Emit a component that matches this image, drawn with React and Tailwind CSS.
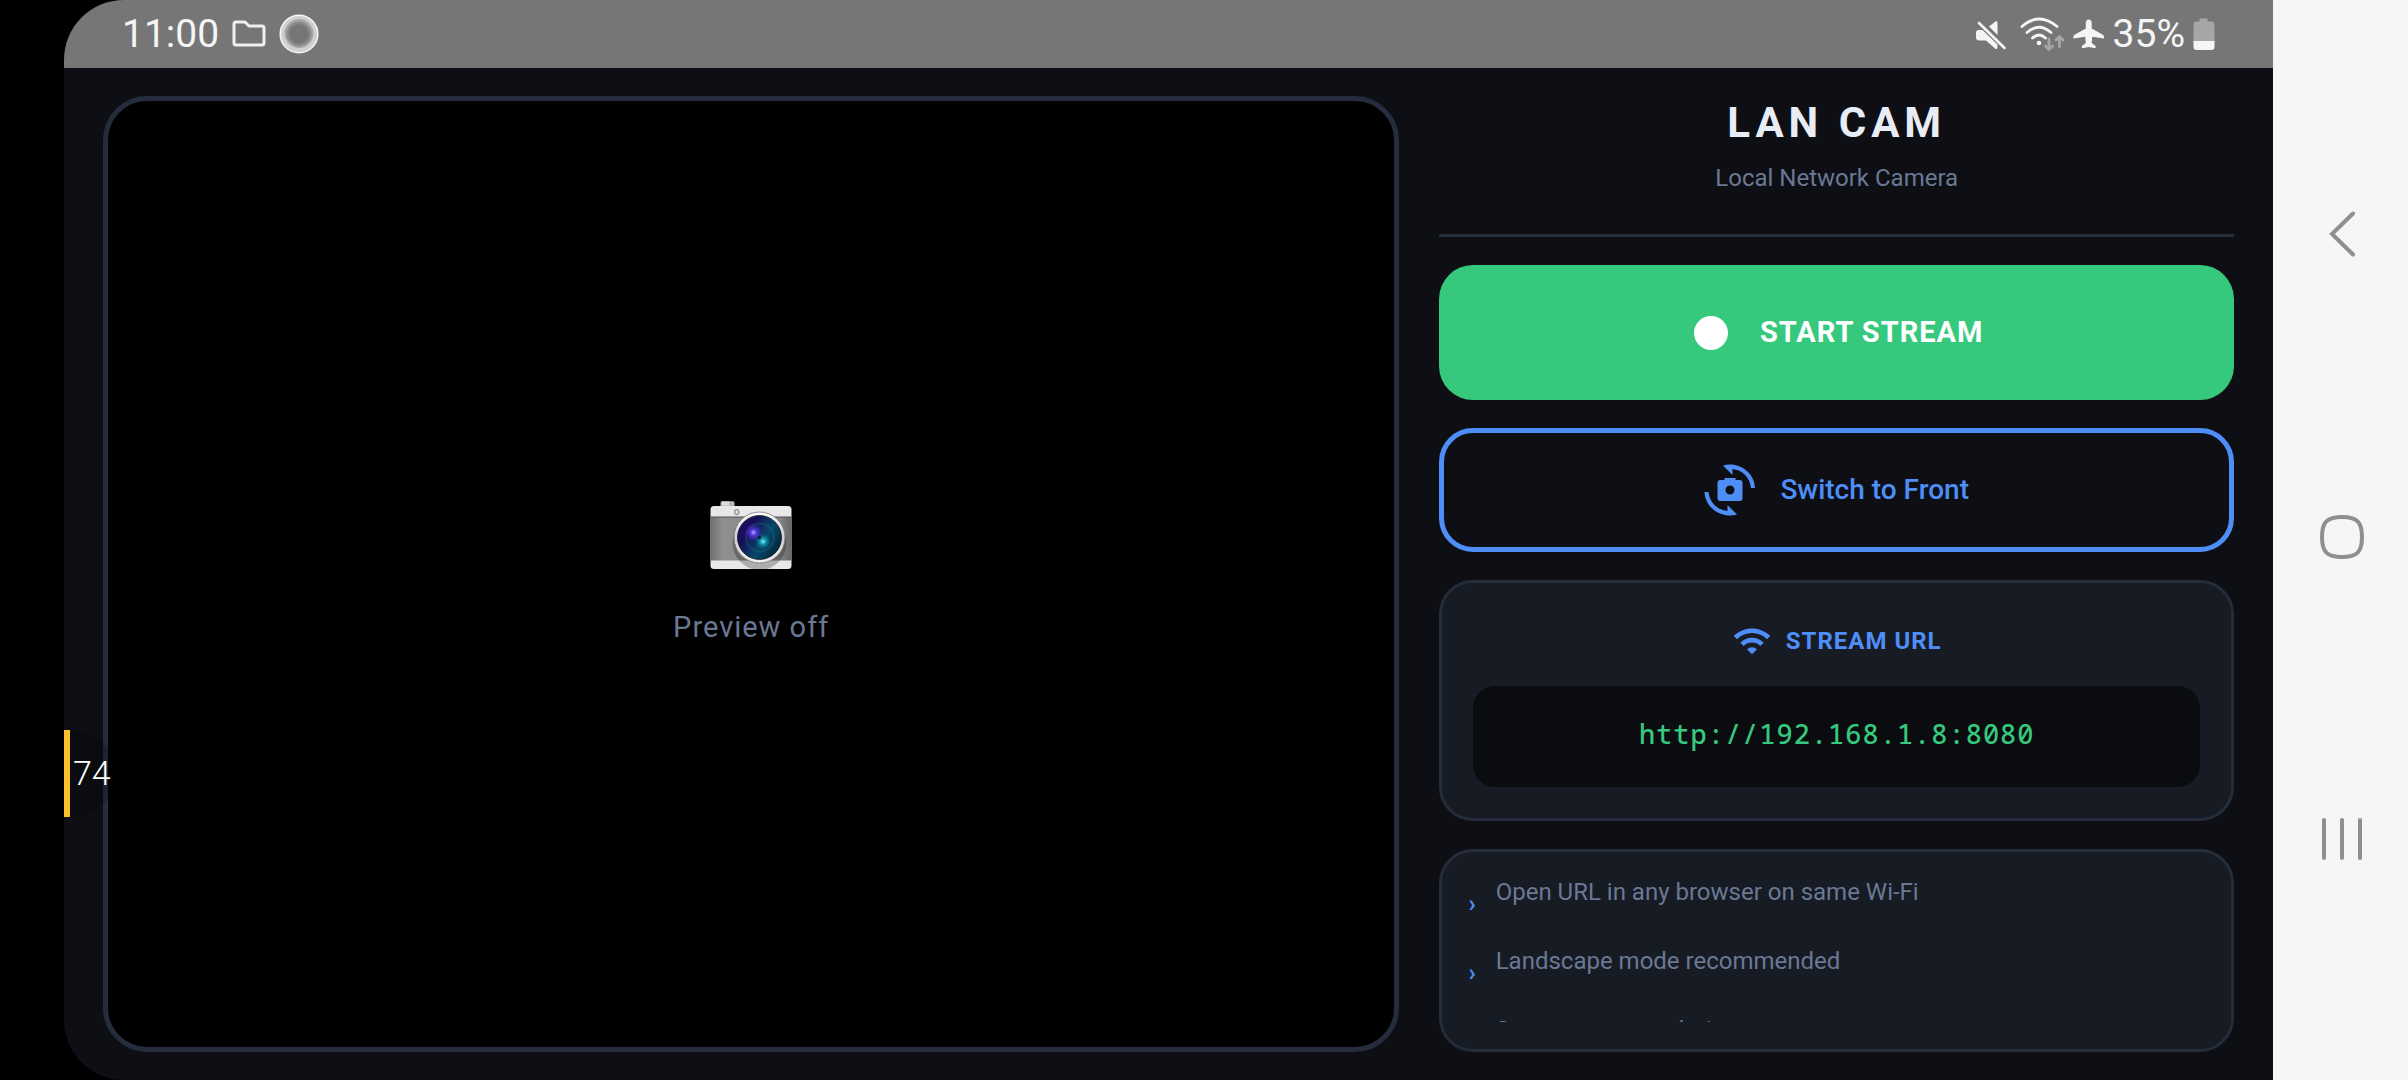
import { MdWifi } from "react-icons/md";

const tips = [
  "Open URL in any browser on same Wi-Fi",
  "Landscape mode recommended",
  "Screen stays on during stream",
];

const MutedIcon = () => (
  <svg viewBox="0 0 32 32" className="mr-1 h-8 w-8" fill="#f5f5f5">
    <path d="M14 8.500 L20.500 3.500 Q22.500 2.500 22.500 5 V17 Z" />
    <path d="M3.500 12 h4 L22.500 26.500 V29.500 Q22 32 20 30.500 L11 22.500 H4.500 Q1 22.500 1 19.500 V15 Q1 12 3.500 12 Z" />
    <path d="M4 5 L29.500 30" stroke="#f5f5f5" strokeWidth="2.600" strokeLinecap="round" />
  </svg>
);

const WifiStatusIcon = () => (
  <svg viewBox="0 0 46 34" className="h-[34px] w-[46px]" fill="none" strokeLinecap="round">
    <g stroke="#f5f5f5" strokeWidth="2.800">
      <path d="M3 9.500 Q20 -5.500 38 9.500" />
      <path d="M8 15.500 Q20 5 32 15.500" />
      <path d="M13.500 21 Q20 15 26.500 21" />
    </g>
    <circle cx="20" cy="26" r="2.300" fill="#f5f5f5" />
    <g stroke="#a6a6a6" strokeWidth="2.800" strokeLinejoin="round">
      <path d="M30 22 V32 M26.500 29 L30 32.500 L33.500 29" />
      <path d="M40.500 29.500 V20 M37 23 L40.500 19.500 L44 23" />
    </g>
  </svg>
);

const AirplaneIcon = () => (
  <svg viewBox="0 0 32 30" className="h-[30px] w-8" fill="#f5f5f5">
    <path d="M15.700 0.500 C17.500 0.500 18.700 2 18.700 4 V9.500 L29.500 15.500 C31 16.500 31.300 17.500 31 19.500 L19.300 17.800 L18.700 24 L22 26.500 C22.800 27.300 22.800 28 22.500 29.300 L15.700 28 L9 29.300 C8.700 28 8.700 27.300 9.500 26.500 L12.800 24 L12.200 17.800 L0.500 19.500 C0.200 17.500 0.500 16.500 2 15.500 L12.800 9.500 V4 C12.800 2 14 0.500 15.700 0.500 Z" />
  </svg>
);

const BatteryIcon = () => (
  <svg viewBox="0 0 22 32" className="h-8 w-[22px]">
    <path d="M6.500 0.500 h8 v3 h4 a3 3 0 0 1 3 3 v17 h-21 v-17 a3 3 0 0 1 3 -3 h3 z" fill="#a6a6a6" />
    <path d="M0.500 23 h21 v6 a3 3 0 0 1 -3 3 h-15 a3 3 0 0 1 -3 -3 z" fill="#f5f5f5" />
  </svg>
);

const FolderIcon = () => (
  <svg viewBox="0 0 34 28" className="h-7 w-[34px]" fill="none" stroke="#f0f0f0" strokeWidth="3" strokeLinejoin="round">
    <path d="M2 4 Q2 2 4 2 H13 L17 6 H30 Q32 6 32 8 V23 Q32 25 30 25 H4 Q2 25 2 23 Z" />
  </svg>
);

const RingIcon = () => (
  <svg viewBox="0 0 40 40" className="h-10 w-10">
    <circle cx="20" cy="20" r="18.800" fill="#d0d0d0" stroke="#f5f5f5" strokeWidth="1.500" />
    <circle cx="20" cy="19.500" r="14.500" fill="#a8a8a8" />
    <circle cx="20" cy="20" r="12.500" fill="#8b8b8b" />
    <circle cx="20" cy="20" r="10" fill="#767676" />
  </svg>
);

const CameraPicture = () => (
  <svg viewBox="0 0 82 70" className="h-[70px] w-[82px]" role="img" aria-label="Camera">
    <defs>
      <linearGradient id="leather" x1="0" x2="1">
        <stop offset="0" stopColor="#6e6e6e" />
        <stop offset="0.150" stopColor="#8f8f8f" />
        <stop offset="0.850" stopColor="#858585" />
        <stop offset="1" stopColor="#666666" />
      </linearGradient>
      <linearGradient id="glass" x1="0" y1="0" x2="1" y2="0.600">
        <stop offset="0" stopColor="#2a0a78" />
        <stop offset="0.350" stopColor="#160f55" />
        <stop offset="0.700" stopColor="#06496a" />
        <stop offset="1" stopColor="#032a3f" />
      </linearGradient>
      <linearGradient id="rim" x1="0" y1="0" x2="0" y2="1">
        <stop offset="0" stopColor="#ffffff" />
        <stop offset="0.500" stopColor="#cfcfcf" />
        <stop offset="1" stopColor="#f2f2f2" />
      </linearGradient>
      <radialGradient id="violet">
        <stop offset="0" stopColor="#a9b4ff" />
        <stop offset="0.300" stopColor="#5a3fe0" />
        <stop offset="1" stopColor="#4a1fc0" stopOpacity="0" />
      </radialGradient>
      <radialGradient id="teal">
        <stop offset="0" stopColor="#7ff5f0" />
        <stop offset="0.350" stopColor="#1899b0" />
        <stop offset="1" stopColor="#0a6a8a" stopOpacity="0" />
      </radialGradient>
      <clipPath id="body">
        <rect x="0.500" y="5" width="81" height="63" rx="3.500" />
      </clipPath>
    </defs>
    <rect x="10.500" y="0.300" width="14" height="6" rx="1.500" fill="#b8b8b8" />
    <rect x="12" y="0.500" width="7" height="4" fill="#dedede" />
    <g clipPath="url(#body)">
      <rect y="5" width="82" height="65" fill="#e8e8e8" />
      <rect y="16" width="82" height="43.500" fill="url(#leather)" />
      <rect y="15.500" width="82" height="1" fill="#555555" />
      <circle cx="49.500" cy="42" r="27" fill="#000000" fillOpacity="0.250" />
    </g>
    <rect x="24.800" y="8.500" width="4" height="5" rx="1.500" fill="#d8d8d8" stroke="#777777" />
    <circle cx="49.500" cy="36.500" r="25.500" fill="url(#rim)" stroke="#777777" strokeWidth="0.800" />
    <circle cx="49.500" cy="36.500" r="22" fill="url(#glass)" stroke="#15151d" strokeWidth="0.800" />
    <circle cx="50" cy="36.500" r="14" fill="none" stroke="#1d6d90" strokeOpacity="0.350" strokeWidth="2" />
    <circle cx="43.500" cy="31.500" r="9" fill="url(#violet)" />
    <circle cx="53" cy="40.500" r="8" fill="url(#teal)" />
    <circle cx="49.500" cy="36.500" r="1.500" fill="#021a24" />
  </svg>
);

const SwitchCameraIcon = () => (
  <svg viewBox="0 0 52 52" className="h-[52px] w-[52px]" fill="#4f8ef7">
    <path d="M19 1.500 C34 -3 50.500 8 51 24 H47 C46 13 38 6 28.500 5 V11 Z" />
    <path d="M33 50.500 C18 55 1 44 0.500 28 H4.500 C5.500 39 14 46 23.500 47 V41 Z" />
    <path
      fillRule="evenodd"
      d="M20.500 14 h11 v2 h4 a3 3 0 0 1 3 3 v15 a3 3 0 0 1 -3 3 h-19 a3 3 0 0 1 -3 -3 v-15 a3 3 0 0 1 3 -3 h4 z M26 21.500 a4.500 4.500 0 1 0 0 9 a4.500 4.500 0 1 0 0 -9 z"
    />
  </svg>
);

const StatusBar = () => (
  <header className="flex h-[68px] shrink-0 items-center justify-between bg-[#767676] px-[58px] text-[39px] leading-none text-[#f5f5f5]">
    <div className="flex items-center gap-[13px]">
      <span>11:00</span>
      <FolderIcon />
      <RingIcon />
    </div>
    <div className="flex items-center gap-2">
      <MutedIcon />
      <WifiStatusIcon />
      <AirplaneIcon />
      <span>35%</span>
      <BatteryIcon />
    </div>
  </header>
);

const NavBar = () => (
  <nav className="flex w-[135px] shrink-0 flex-col items-center justify-between bg-[#f6f6f6] pt-[210px] pb-[217px] pl-[3px]">
    <button type="button" aria-label="Back">
      <svg viewBox="0 0 48 48" className="h-12 w-12" fill="none" stroke="#8f8f8f" strokeWidth="4" strokeLinecap="round">
        <path d="M35 3.500 L14 24 L35 44.500" />
      </svg>
    </button>
    <button type="button" aria-label="Home">
      <svg viewBox="0 0 48 48" className="h-12 w-12" fill="none" stroke="#8f8f8f" strokeWidth="4">
        <path d="M24 4 C39 4 44 9 44 24 C44 39 39 44 24 44 C9 44 4 39 4 24 C4 9 9 4 24 4 Z" />
      </svg>
    </button>
    <button type="button" aria-label="Recent apps">
      <svg viewBox="0 0 48 48" className="h-12 w-12" stroke="#8f8f8f" strokeWidth="4" strokeLinecap="round">
        <path d="M6 5 V43 M24 5 V43 M42 5 V43" />
      </svg>
    </button>
  </nav>
);

const Preview = () => (
  <section className="flex flex-col items-center justify-center gap-9 rounded-[44px] border-[5px] border-[#252c3d] bg-black">
    <CameraPicture />
    <p className="text-[29px] leading-10 tracking-[1px] text-[#6b7894]">Preview off</p>
  </section>
);

const Controls = () => (
  <section className="flex min-h-0 flex-col">
    <div className="flex flex-col items-center">
      <h1 className="text-[42px] leading-[54px] font-bold tracking-[5px] text-[#e8ecf5]">LAN CAM</h1>
      <p className="mt-3 text-2xl leading-8 text-[#6b7894]">Local Network Camera</p>
    </div>
    <hr className="mt-10 border-t-[3px] border-[#252c3a]" />

    <button
      type="button"
      className="mt-7 flex h-[135px] shrink-0 items-center justify-center gap-8 rounded-[34px] bg-[#36c97d] pl-1 text-[29px] font-bold tracking-[1px] text-white"
    >
      <span className="h-[34px] w-[34px] rounded-full bg-white" />
      START STREAM
    </button>

    <button
      type="button"
      className="mt-7 flex h-[124px] shrink-0 items-center justify-center gap-6 rounded-[34px] border-[5px] border-[#4f8ef7] text-[28px] font-medium text-[#4f8ef7]"
    >
      <SwitchCameraIcon />
      Switch to Front
    </button>

    <div className="mt-7 shrink-0 rounded-[34px] border-[3px] border-[#252c3a] bg-[#161b24] px-[31px] pt-[38px] pb-[31px]">
      <div className="flex items-center justify-center gap-[14px] text-[#4f8ef7]">
        <MdWifi className="h-10 w-10" />
        <h2 className="text-2xl leading-8 font-bold tracking-[1px]">STREAM URL</h2>
      </div>
      <p className="mt-[25px] flex h-[101px] items-center justify-center rounded-[22px] bg-[#0a0c10] pb-1 font-['Droid_Sans_Mono','Noto_Sans_Mono','DejaVu_Sans_Mono',monospace] text-[27px] font-medium tracking-[1px] text-[#36c97d]">
        http://192.168.1.8:8080
      </p>
    </div>

    <div className="mt-7 min-h-0 flex-1 rounded-[34px] border-[3px] border-[#252c3a] bg-[#161b24] px-[26px] pt-[25px] pb-[27px]">
      <ul className="h-full overflow-hidden">
        {tips.map((tip) => (
          <li key={tip} className="flex h-[69px] gap-5 text-2xl leading-[30px] text-[#6b7894]">
            <span className="pt-3 font-bold text-[#4f8ef7]">›</span>
            {tip}
          </li>
        ))}
      </ul>
    </div>
  </section>
);

export default function App() {
  return (
    <div className="flex h-screen bg-black pl-16 font-[Roboto,sans-serif]">
      <div className="relative flex min-w-0 flex-1 flex-col overflow-hidden rounded-l-[60px] bg-[#0d0f14]">
        <StatusBar />
        <main className="grid min-h-0 flex-1 grid-cols-[31fr_19fr] grid-rows-1 gap-10 px-[39px] py-7">
          <Preview />
          <Controls />
        </main>

        {/* edge panel counter floating over the app */}
        <div className="absolute top-[730px] left-0 flex h-[87px] w-[52px] items-center rounded-r-[44px] border-l-[6px] border-[#fdbf2d] bg-black/20 pl-[3px] text-[34px] font-light text-white">
          74
        </div>
      </div>
      <NavBar />
    </div>
  );
}
